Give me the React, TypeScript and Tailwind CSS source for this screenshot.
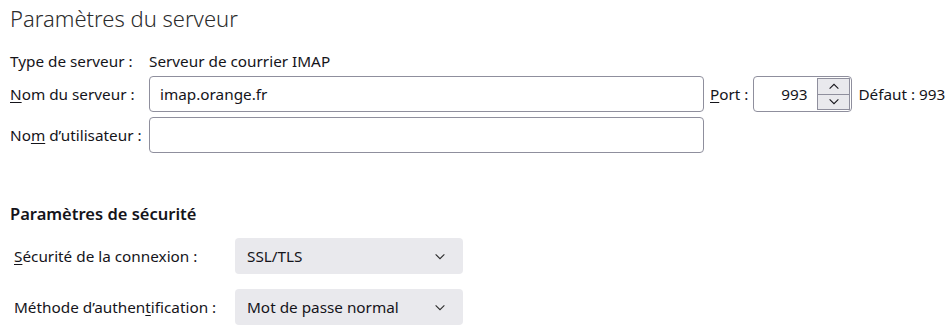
import React from 'react';

const ChevronDown = ({ className = '' }: { className?: string }) => (
  <svg viewBox="0 0 12 8" width="12" height="7" className={className} fill="none" stroke="currentColor" strokeWidth="1.2">
    <path d="M1 1.5 L6 6.5 L11 1.5" />
  </svg>
);

const ChevronUp = ({ className = '' }: { className?: string }) => (
  <svg viewBox="0 0 12 8" width="12" height="7" className={className} fill="none" stroke="currentColor" strokeWidth="1.2">
    <path d="M1 6.5 L6 1.5 L11 6.5" />
  </svg>
);

const SelectBox = ({ value }: { value: string }) => (
  <div className="w-[228px] h-[36px] rounded-[4px] bg-[#e9e9ed] flex items-center justify-between pl-[12px] pr-[17px] text-[#15141a]">
    <span>{value}</span>
    <ChevronDown className="text-[#2b2b2b]" />
  </div>
);

export default function App() {
  return (
    <div className="w-[951px] h-[331px] bg-white text-[#15141a] text-[15.3px] overflow-hidden" style={{ fontFamily: '"Noto Sans", "Open Sans", sans-serif' }}>
      <h1 className="pl-[10px] pt-[3px] text-[22px] font-light text-[#2c2c2c] leading-[30px]">Paramètres du serveur</h1>

      {/* serveur */}
      <div className="mt-[18px] pl-[10px] grid grid-cols-[139px_555px_auto] items-center gap-y-[5px]">
        <span className="leading-[20px]">Type de serveur :</span>
        <span className="leading-[20px] col-span-2">Serveur de courrier IMAP</span>

        <span><span className="underline underline-offset-2">N</span>om du serveur :</span>
        <div className="h-[36px] border border-[#8f8f9d] rounded-[4px] flex items-center px-[10px]">imap.orange.fr</div>
        <div className="flex items-center">
          <span className="ml-[6px]"><span className="underline underline-offset-2">P</span>ort :</span>
          <div className="ml-[5px] w-[99px] h-[36px] border border-[#8f8f9d] rounded-[4px] flex items-center">
            <span className="flex-1 text-right pr-[10px]">993</span>
            <div className="w-[33px] h-[32px] mr-[1px] flex flex-col border border-[#8f8f9d]">
              <div className="flex-1 bg-[#e9e9ed] flex items-center justify-center border-b border-[#8f8f9d]"><ChevronUp /></div>
              <div className="flex-1 bg-[#e9e9ed] flex items-center justify-center"><ChevronDown /></div>
            </div>
          </div>
          <span className="ml-[6px]">Défaut : 993</span>
        </div>

        <span>No<span className="underline underline-offset-2">m</span> d’utilisateur :</span>
        <div className="h-[36px] border border-[#8f8f9d] rounded-[4px]"></div>
        <div></div>
      </div>

      {/* sécurité */}
      <div className="mt-[50px] pl-[10px] text-[16.5px] font-semibold leading-[22px]">Paramètres de sécurité</div>
      <div className="mt-[13px] pl-[14px] grid grid-cols-[221px_auto] items-center gap-y-[15px]">
        <span><span className="underline underline-offset-2">S</span>écurité de la connexion :</span>
        <SelectBox value="SSL/TLS" />
        <span>Méthode d’authen<span className="underline underline-offset-2">t</span>ification :</span>
        <SelectBox value="Mot de passe normal" />
      </div>
    </div>
  );
}
